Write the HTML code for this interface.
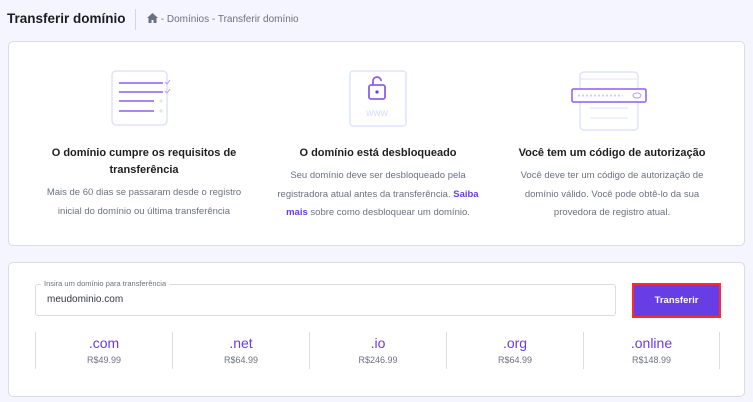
<!DOCTYPE html>
<html><head><meta charset="utf-8"><style>
*{margin:0;padding:0;box-sizing:border-box}
body{width:753px;height:402px;background:#f4f5ff;font-family:"Liberation Sans",sans-serif;position:relative;overflow:hidden;color:#2f1c6a}
.hdr{position:absolute;top:11px;left:7px;font-size:13.5px;font-weight:bold;color:#1d1e20}
.sep{position:absolute;left:135px;top:9px;width:1px;height:21px;background:#d5d5dd}
.bc{position:absolute;left:147px;top:13px;font-size:10px;color:#6d7081}
.card{position:absolute;left:8px;right:8px;background:#fff;border:1px solid #dadce0;border-radius:5px}
.col{position:absolute;top:0;width:234px;text-align:center}
.txt{position:absolute;top:103px;left:0;width:100%}
.t{font-size:11px;font-weight:bold;color:#1d1e20;line-height:17px}
.d{margin-top:5px;font-size:9.5px;color:#6d7081;line-height:18.5px;padding:0 13px}
.d b{color:#673de6}
.in{position:absolute;left:26px;top:21px;width:581px;height:32px;border:1px solid #dadce0;border-radius:3px;font-size:10px;color:#36344d;padding:9px 11px}
.lbl{position:absolute;left:5px;top:-6px;background:#fff;padding:0 3px;font-size:7.5px;color:#6d7081}
.btn{position:absolute;left:623px;top:20px;width:89px;height:35px;background:#673de6;border:2px solid #ff2a2a;color:#fff;font-size:9.5px;font-weight:bold;text-align:center;line-height:31px}
.tl{position:absolute;top:69px;width:137px;height:37px;border-left:1px solid #dadce0;text-align:center}
.tl .n{font-size:14px;color:#673de6;margin-top:3px}
.tl .p{font-size:9px;color:#6d7081;margin-top:4px}
</style></head><body>
<div class="hdr">Transferir domínio</div>
<div class="sep"></div>
<div class="bc"><svg width="11" height="10" viewBox="0 0 11 10" style="vertical-align:-1px"><path d="M5.5 0L0 5h1.5v5h3V7h2v3h3V5H11z" fill="#6d7081"/></svg> - Domínios - Transferir domínio</div>
<div class="card" style="top:41px;height:205px">
 <div class="col" style="left:18px">
  <svg style="position:absolute;left:84px;top:28px" width="62" height="56" viewBox="0 0 62 56"><rect x="1" y="1" width="55" height="54" rx="4" fill="none" stroke="#dfe3ff" stroke-width="1.5"/><g stroke="#8c5ef0" stroke-width="1.5"><line x1="8" y1="13" x2="52" y2="13"/><line x1="8" y1="22" x2="52" y2="22"/><line x1="8" y1="31" x2="43" y2="31"/><line x1="8" y1="41" x2="43" y2="41"/></g><path d="M54 12l2 2 3-4M54 21l2 2 3-4" stroke="#b79cf5" fill="none"/><circle cx="50" cy="31" r="1.6" fill="#dfe3ff"/><circle cx="50" cy="41" r="1.6" fill="#dfe3ff"/></svg>
  <div class="txt"><div class="t">O domínio cumpre os requisitos de<br>transferência</div>
  <div class="d">Mais de 60 dias se passaram desde o registro inicial do domínio ou última transferência</div></div>
 </div>
 <div class="col" style="left:252px">
  <svg style="position:absolute;left:88px;top:28px" width="58" height="58" viewBox="0 0 58 58"><rect x="1" y="1" width="56" height="55" rx="3" fill="none" stroke="#dfe3ff" stroke-width="1.5"/><rect x="20" y="15" width="16" height="14" rx="2" fill="none" stroke="#8c5ef0" stroke-width="1.8"/><path d="M24 15v-4a4 4 0 0 1 8 0" fill="none" stroke="#8c5ef0" stroke-width="1.8"/><circle cx="28" cy="22" r="1.6" fill="#673de6"/><text x="28" y="46" font-size="10" fill="#d5dbff" text-anchor="middle" font-family="Liberation Sans">www</text></svg>
  <div class="txt"><div class="t">O domínio está desbloqueado</div>
  <div class="d">Seu domínio deve ser desbloqueado pela registradora atual antes da transferência. <b>Saiba mais</b> sobre como desbloquear um domínio.</div></div>
 </div>
 <div class="col" style="left:486px">
  <svg style="position:absolute;left:76px;top:28px" width="80" height="62" viewBox="0 0 80 62"><rect x="9" y="2" width="58" height="58" rx="4" fill="#fff" stroke="#dfe3ff" stroke-width="1.5"/><line x1="9" y1="9" x2="67" y2="9" stroke="#dfe3ff"/><line x1="19" y1="38" x2="57" y2="38" stroke="#dfe3ff"/><line x1="19" y1="48" x2="57" y2="48" stroke="#dfe3ff"/><rect x="1" y="19" width="74" height="13" rx="1.5" fill="#fff" stroke="#8c5ef0" stroke-width="1.5"/><line x1="7" y1="25.5" x2="52" y2="25.5" stroke="#d9ccfb" stroke-width="2" stroke-dasharray="2 2"/><ellipse cx="66" cy="25.5" rx="4" ry="2.5" fill="none" stroke="#b79cf5"/></svg>
  <div class="txt"><div class="t">Você tem um código de autorização</div>
  <div class="d">Você deve ter um código de autorização de domínio válido. Você pode obtê-lo da sua provedora de registro atual.</div></div>
 </div>
</div>
<div class="card" style="top:262px;height:135px">
 <div class="in"><span class="lbl">Insira um domínio para transferência</span>meudominio.com</div>
 <div class="btn">Transferir</div>
 <div class="tl" style="left:26px"><div class="n">.com</div><div class="p">R$49.99</div></div>
 <div class="tl" style="left:163px"><div class="n">.net</div><div class="p">R$64.99</div></div>
 <div class="tl" style="left:300px"><div class="n">.io</div><div class="p">R$246.99</div></div>
 <div class="tl" style="left:437px"><div class="n">.org</div><div class="p">R$64.99</div></div>
 <div class="tl" style="left:574px;border-right:1px solid #dadce0"><div class="n">.online</div><div class="p">R$148.99</div></div>
</div>
</body></html>
